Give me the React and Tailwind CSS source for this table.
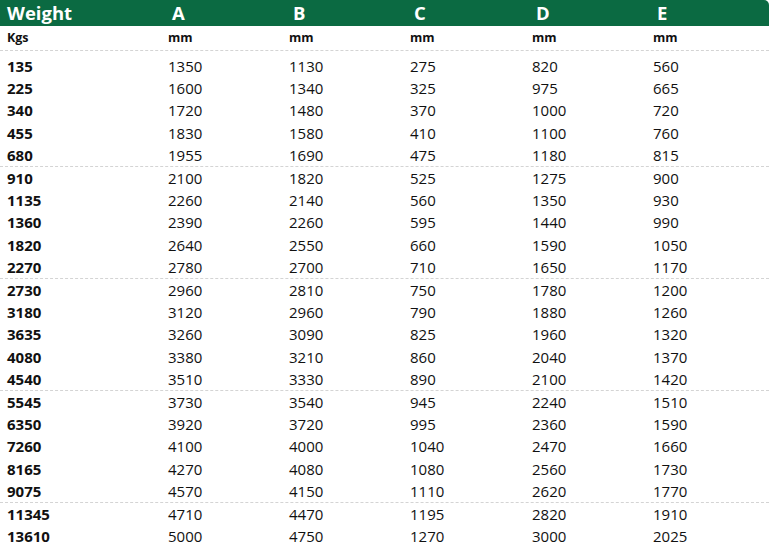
import React from 'react';

const rows = [
  ['135', '1350', '1130', '275', '820', '560'],
  ['225', '1600', '1340', '325', '975', '665'],
  ['340', '1720', '1480', '370', '1000', '720'],
  ['455', '1830', '1580', '410', '1100', '760'],
  ['680', '1955', '1690', '475', '1180', '815'],
  ['910', '2100', '1820', '525', '1275', '900'],
  ['1135', '2260', '2140', '560', '1350', '930'],
  ['1360', '2390', '2260', '595', '1440', '990'],
  ['1820', '2640', '2550', '660', '1590', '1050'],
  ['2270', '2780', '2700', '710', '1650', '1170'],
  ['2730', '2960', '2810', '750', '1780', '1200'],
  ['3180', '3120', '2960', '790', '1880', '1260'],
  ['3635', '3260', '3090', '825', '1960', '1320'],
  ['4080', '3380', '3210', '860', '2040', '1370'],
  ['4540', '3510', '3330', '890', '2100', '1420'],
  ['5545', '3730', '3540', '945', '2240', '1510'],
  ['6350', '3920', '3720', '995', '2360', '1590'],
  ['7260', '4100', '4000', '1040', '2470', '1660'],
  ['8165', '4270', '4080', '1080', '2560', '1730'],
  ['9075', '4570', '4150', '1110', '2620', '1770'],
  ['11345', '4710', '4470', '1195', '2820', '1910'],
  ['13610', '5000', '4750', '1270', '3000', '2025'],
];

const cols = 'grid grid-cols-[161px_121px_121px_122px_121px_1fr]';

export default function App() {
  return (
    <div className="w-[770px] h-[548px] bg-white overflow-hidden font-['Open_Sans',sans-serif] text-[#111]">
      <div className="w-[769px]">
        {/* green title bar */}
        <div className={`${cols} h-[26px] items-center bg-[#0b6a42] rounded-tr-[5px] text-white font-bold text-[18.5px] leading-none`}>
          <div className="pl-[7px]">Weight</div>
          {['A', 'B', 'C', 'D', 'E'].map(l => (
            <div key={l} className="pl-[11px]">{l}</div>
          ))}
        </div>

        {/* units */}
        <div className={`${cols} h-[25px] items-center border-b border-dashed border-[#d4d4d4] text-[12.5px] font-bold`}>
          <div className="pl-[7px]">Kgs</div>
          {[1, 2, 3, 4, 5].map(i => (
            <div key={i} className="pl-[7px]">mm</div>
          ))}
        </div>

        <div className="mt-[4px]">
          {rows.map((r, i) => (
            <div
              key={r[0]}
              className={`${cols} h-[22.4px] items-center text-[15px] leading-none ${i % 5 === 4 && i < 20 ? 'border-b border-dashed border-[#d4d4d4]' : ''}`}
            >
              <div className="pl-[7px] font-bold">{r[0]}</div>
              {r.slice(1).map((v, j) => (
                <div key={j} className="pl-[7px]">{v}</div>
              ))}
            </div>
          ))}
        </div>
      </div>
    </div>
  );
}
